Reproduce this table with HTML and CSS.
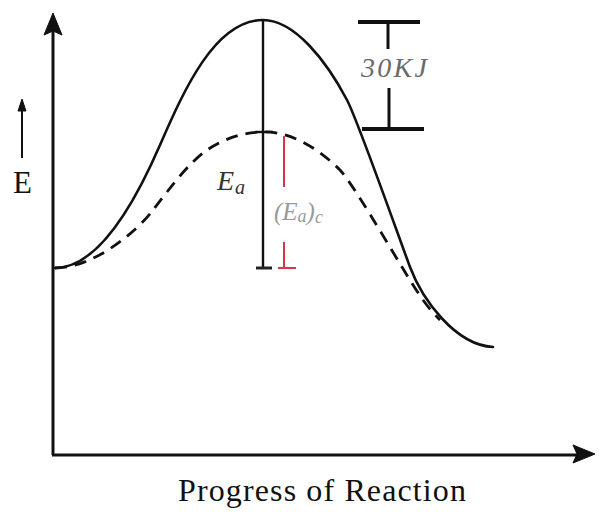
FILE: index.html
```html
<!DOCTYPE html>
<html lang="en">
<head>
<meta charset="utf-8">
<title>Energy profile</title>
<link rel="stylesheet" href="styles.css">
</head>
<body>
<main class="figure">
<svg class="chart" width="607" height="512" viewBox="0 0 607 512" xmlns="http://www.w3.org/2000/svg">
  <!-- axes -->
  <line class="axis" x1="53" y1="30" x2="53" y2="455"/>
  <line class="axis" x1="52" y1="455" x2="578" y2="455"/>
  <polygon class="head" points="53,13 44,35 53,31 62,35"/>
  <polygon class="head" points="595,454 573,445 577,454 573,463"/>

  <!-- E label arrow -->
  <line class="thin" x1="22" y1="108" x2="22" y2="158"/>
  <polygon class="head" points="22,99 18,111 26,111"/>
  <text class="lbl-e" x="13" y="193">E</text>

  <!-- curves -->
  <path class="solid" d="M55,268 C100,268 137,198 160,145 C184,90 215,20 263,20 C295,20 327,62 347,100 C358,121 398,235 410,267 C422,299 455,345 493,347"/>
  <path class="dashed" d="M55,268 C95,268 138,230 153,210 C168,191 188,163 207,150 C225,138 245,132 263,132 C290,131 318,148 340,170 C358,190 405,275 423,300 C428,307 434,314 440,320"/>

  <!-- Ea marker -->
  <line class="mark" x1="263" y1="21" x2="263" y2="268"/>
  <line class="tick" x1="256" y1="268" x2="272" y2="268"/>
  <line class="mark" x1="255" y1="132" x2="273" y2="132"/>
  <text class="lbl-ea" x="217" y="190">E<tspan class="sub" dx="1" dy="4">a</tspan></text>

  <!-- catalysed Ea marker -->
  <line class="red" x1="284" y1="136" x2="284" y2="187"/>
  <line class="red" x1="284" y1="242" x2="284" y2="268"/>
  <line class="red" x1="278" y1="268" x2="296" y2="268"/>
  <text class="lbl-eac" x="274" y="220">(E<tspan class="sub" dy="2">a</tspan><tspan dy="-2">)</tspan><tspan class="sub" dy="3">c</tspan></text>

  <!-- 30KJ bracket -->
  <line class="bar" x1="358" y1="22" x2="420" y2="22"/>
  <line class="stem" x1="388" y1="22" x2="388" y2="49"/>
  <text class="lbl-kj" x="361" y="77" textLength="66" lengthAdjust="spacing">30KJ</text>
  <line class="stem" x1="389" y1="88" x2="389" y2="129"/>
  <line class="bar" x1="362" y1="129" x2="424" y2="129"/>

  <text class="lbl-x" x="178" y="501" textLength="288" lengthAdjust="spacing">Progress of Reaction</text>
</svg>
</main>
</body>
</html>
```
FILE: styles.css
```css
html, body {
  margin: 0;
  padding: 0;
  background: #ffffff;
}

.figure {
  display: block;
  width: 607px;
  height: 512px;
}

.chart {
  display: block;
}

.axis {
  stroke: #111;
  stroke-width: 3;
  fill: none;
}

.head {
  fill: #111;
  stroke: #111;
  stroke-width: 1;
  stroke-linejoin: miter;
}

.thin {
  stroke: #111;
  stroke-width: 2;
}

.solid {
  fill: none;
  stroke: #111;
  stroke-width: 2.6;
  stroke-linecap: round;
}

.dashed {
  fill: none;
  stroke: #111;
  stroke-width: 2.8;
  stroke-dasharray: 12 8;
}

.mark {
  stroke: #111;
  stroke-width: 2.4;
}

.tick {
  stroke: #222;
  stroke-width: 3;
}

.red {
  stroke: #d8344a;
  stroke-width: 2;
}

.bar {
  stroke: #111;
  stroke-width: 4;
}

.stem {
  stroke: #111;
  stroke-width: 3;
}

.lbl-e {
  font-family: "Liberation Serif", "Times New Roman", serif;
  font-size: 31px;
  fill: #111;
}

.lbl-ea {
  font-family: "Liberation Serif", "Times New Roman", serif;
  font-style: italic;
  font-size: 28px;
  fill: #333;
}

.lbl-eac {
  font-family: "Liberation Serif", "Times New Roman", serif;
  font-style: italic;
  font-size: 25px;
  fill: #9a9a9a;
}

.sub {
  font-size: 0.72em;
}

.lbl-kj {
  font-family: "Liberation Serif", "Times New Roman", serif;
  font-style: italic;
  font-size: 28px;
  fill: #6a6a6a;
}

.lbl-x {
  font-family: "Liberation Serif", "Times New Roman", serif;
  font-size: 32px;
  fill: #111;
}
```
